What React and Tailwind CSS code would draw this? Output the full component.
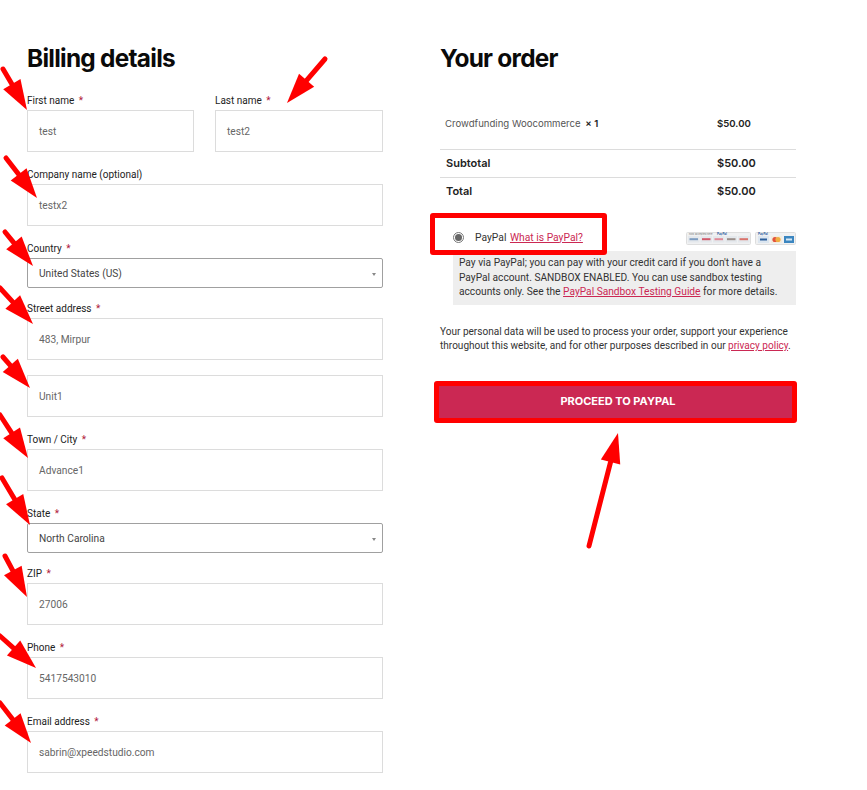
const arrows = [
  [3, 69, 27, 110],
  [325, 59, 287, 103],
  [6, 158, 37, 198],
  [5, 232, 33, 266],
  [0, 288, 33, 324],
  [3, 357, 30, 388],
  [0, 415, 28, 458],
  [2, 478, 30, 525],
  [5, 556, 27, 597],
  [0, 636, 36, 668],
  [0, 703, 31, 743],
  [589, 546, 618, 433],
];

function Arrow({ x1, y1, x2, y2 }) {
  const len = Math.hypot(x2 - x1, y2 - y1);
  const ux = (x2 - x1) / len;
  const uy = (y2 - y1) / len;
  const bx = x2 - ux * 30;
  const by = y2 - uy * 30;
  const w = 10;
  return (
    <g>
      <line x1={x1} y1={y1} x2={bx} y2={by} stroke="#ff0000" strokeWidth="5" strokeLinecap="round" />
      <polygon points={`${x2},${y2} ${bx - uy * w},${by + ux * w} ${bx + uy * w},${by - ux * w}`} fill="#ff0000" />
    </g>
  );
}

function Label({ text, required }) {
  return (
    <label className="block h-5 text-[10px] leading-[21px] text-[#222]">
      {text}
      {required && <span className="ml-[2px] text-[#b0173a]"> *</span>}
    </label>
  );
}

function Field({ label, required, value, className = "mb-3" }) {
  return (
    <div className={className}>
      {label && <Label text={label} required={required} />}
      <div className="flex h-[42px] items-center border border-[#dcdcdc] bg-white pl-[11px] pt-[2px] text-[10.2px] text-[#666]">
        {value}
      </div>
    </div>
  );
}

function SelectField({ label, value }) {
  return (
    <div className="mb-[10px]">
      <Label text={label} required />
      <div className="flex h-[30px] items-center justify-between rounded-[2px] border border-[#a0a0a0] bg-white pl-[11px] pr-[6px] pt-[2px] text-[10.2px] text-[#444]">
        {value}
        <span className="h-0 w-0 border-x-[2.5px] border-t-[3px] border-x-transparent border-t-[#888]" />
      </div>
    </div>
  );
}

function CardLogos() {
  const cells = [2, 14.5, 27, 39.5, 52];
  const bars = ["#7d9cc0", "#d2596a", "#e08a98", "#9b8f8a", "#d9736c"];
  return (
    <svg width="110" height="14" viewBox="0 0 110 14" className="block">
      <rect x="0.5" y="1.5" width="64" height="12" rx="1" fill="#f0f1f2" stroke="#dedede" />
      <text x="3" y="3.5" fontSize="2.6" fill="#777" fontFamily="Inter, sans-serif">now accepted here</text>
      <text x="31" y="3.5" fontSize="3" fontWeight="700" fill="#2c5d9f" fontFamily="Inter, sans-serif">PayPal</text>
      {cells.map((x, i) => (
        <g key={x}>
          <rect x={x} y="5" width="11.5" height="6.5" fill="#e4e8ec" />
          <rect x={x + 1.5} y="7.2" width="8.5" height="2" fill={bars[i]} />
        </g>
      ))}
      <rect x="69.5" y="1.5" width="40" height="12" rx="1" fill="#f0f1f2" stroke="#dedede" />
      <text x="72" y="3.5" fontSize="3" fontWeight="700" fill="#2c5d9f" fontFamily="Inter, sans-serif">PayPal</text>
      <rect x="72" y="5" width="11" height="7" fill="#dce6f0" />
      <rect x="74" y="7.5" width="7" height="2" fill="#2d5f9b" />
      <rect x="85" y="5" width="11" height="7" fill="#f3ecdf" />
      <circle cx="89" cy="8.5" r="2.6" fill="#e2513c" />
      <circle cx="92" cy="8.5" r="2.6" fill="#f0ae42" />
      <rect x="98" y="5" width="10" height="7" fill="#3b86c0" />
      <rect x="100" y="7.5" width="6" height="2" fill="#d7e8f4" />
    </svg>
  );
}

export default function App() {
  return (
    <div className="relative h-[790px] w-[867px] overflow-hidden bg-white font-['Roboto',sans-serif]">
      <div className="flex pl-[27px] pt-[44px]">
        {/* BILLING */}
        <div className="w-[356px]">
          <h2 className="mb-[14px] h-[32px] font-['Inter',sans-serif] text-[24.4px] font-bold leading-[28px] tracking-[-0.03em] text-[#0a0a0a]">
            Billing details
          </h2>
          <div className="flex gap-[21px]">
            <Field label="First name" required value="test" className="mb-3 w-[167px]" />
            <Field label="Last name" required value="test2" className="mb-3 w-[168px]" />
          </div>
          <Field label="Company name (optional)" value="testx2" />
          <SelectField label="Country" value="United States (US)" />
          <Field label="Street address" required value="483, Mirpur" className="mb-[15px]" />
          <Field value="Unit1" />
          <Field label="Town / City" required value="Advance1" />
          <SelectField label="State" value="North Carolina" />
          <Field label="ZIP" required value="27006" />
          <Field label="Phone" required value="5417543010" />
          <Field label="Email address" required value="sabrin@xpeedstudio.com" />
        </div>

        {/* ORDER */}
        <div className="ml-[57px] w-[356px]">
          <h2 className="h-[32px] font-['Inter',sans-serif] text-[24.4px] font-bold leading-[28px] tracking-[-0.03em] text-[#0a0a0a]">
            Your order
          </h2>
          <div className="mt-[30px] flex h-[44px] items-center justify-between border-b border-[#dcdcdc] pb-[6px] pl-[5px] font-['Inter',sans-serif]">
            <span className="text-[9.6px] text-[#555]">
              Crowdfunding Woocommerce <b className="ml-[2px] font-semibold text-[#222]">× 1</b>
            </span>
            <span className="w-[79px] text-[9.6px] font-semibold text-[#222]">$50.00</span>
          </div>
          <div className="flex h-[28px] items-center justify-between border-b border-[#dcdcdc] pl-[6px] font-['Inter',sans-serif] text-[11px] font-semibold text-[#222]">
            <span>Subtotal</span>
            <span className="w-[79px]">$50.00</span>
          </div>
          <div className="flex h-[28px] items-center justify-between pb-[2px] pl-[6px] font-['Inter',sans-serif] text-[11px] font-semibold text-[#222]">
            <span>Total</span>
            <span className="w-[79px]">$50.00</span>
          </div>

          <div className="mt-[20px] flex h-[25px] items-center justify-between pb-[2px] pl-[13px]">
            <div className="flex items-center text-[10.3px] text-[#333]">
              <span className="mr-[11px] flex h-[11px] w-[11px] items-center justify-center rounded-full border border-[#777]">
                <span className="h-[7px] w-[7px] rounded-full bg-[#666]" />
              </span>
              PayPal&nbsp;
              <a className="ml-px text-[#cb2853] underline">What is PayPal?</a>
            </div>
            <CardLogos />
          </div>
          <div className="ml-[13px] h-[54px] bg-[#eeeeee] px-[6px] pt-[5px] text-[10.2px] leading-[14.5px] text-[#333]">
            Pay via PayPal; you can pay with your credit card if you don't have a PayPal account. SANDBOX ENABLED. You can use sandbox testing accounts only. See the{" "}
            <a className="text-[#cb2853] underline">PayPal Sandbox Testing Guide</a> for more details.
          </div>
          <p className="mt-[20px] text-[10.05px] leading-[14px] text-[#333]">
            Your personal data will be used to process your order, support your experience throughout this website, and for other purposes described in our{" "}
            <a className="text-[#cb2853] underline">privacy policy</a>.
          </p>
          <button className="ml-[-1px] mt-[33px] flex h-[32px] w-[353px] items-center justify-center bg-[#cb2853] pb-[2px] pl-[5px] font-['Inter',sans-serif] text-[11px] font-bold text-white">
            PROCEED TO PAYPAL
          </button>
        </div>
      </div>

      {/* ANNOTATIONS */}
      <div className="pointer-events-none absolute left-[430px] top-[213px] h-[42px] w-[177px] rounded-[3px] border-[5px] border-[#ff0000]" />
      <div className="pointer-events-none absolute left-[434px] top-[381px] h-[42px] w-[363px] rounded-[3px] border-[5px] border-[#ff0000]" />
      <svg className="pointer-events-none absolute left-0 top-0" width="867" height="790">
        {arrows.map(([x1, y1, x2, y2], i) => (
          <Arrow key={i} x1={x1} y1={y1} x2={x2} y2={y2} />
        ))}
      </svg>
    </div>
  );
}
